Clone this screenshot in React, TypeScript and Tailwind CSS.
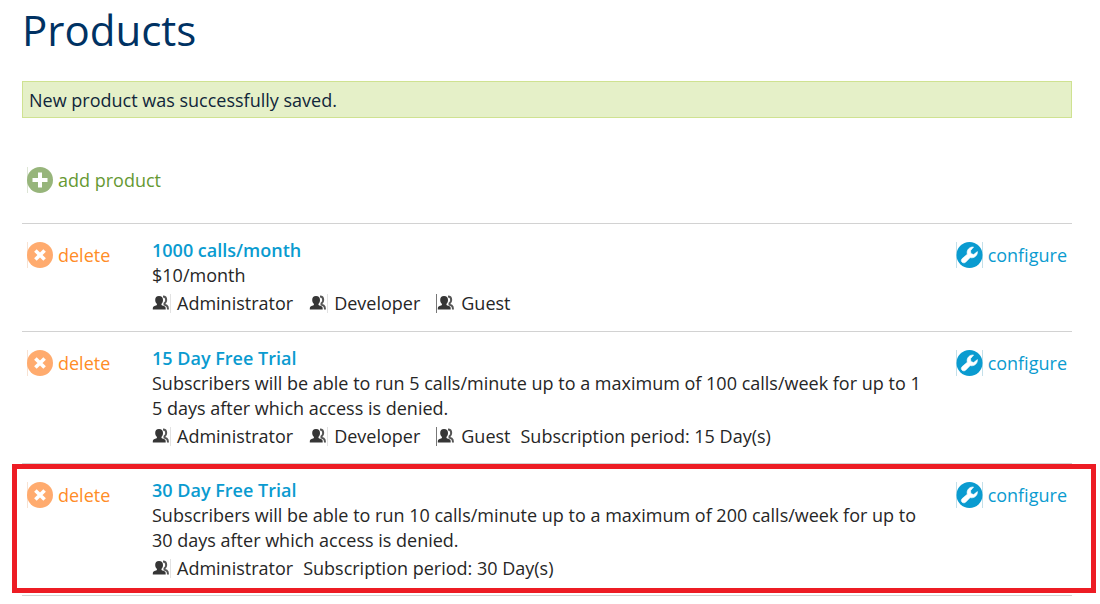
import { Fragment } from 'react';

type Product = {
  name: string;
  description: string[];
  roles: string[];
  period?: string;
  highlighted?: boolean;
};

const products: Product[] = [
  {
    name: '1000 calls/month',
    description: ['$10/month'],
    roles: ['Administrator', 'Developer', 'Guest'],
  },
  {
    name: '15 Day Free Trial',
    description: [
      'Subscribers will be able to run 5 calls/minute up to a maximum of 100 calls/week for up to 1',
      '5 days after which access is denied.',
    ],
    roles: ['Administrator', 'Developer', 'Guest'],
    period: '15 Day(s)',
  },
  {
    name: '30 Day Free Trial',
    description: [
      'Subscribers will be able to run 10 calls/minute up to a maximum of 200 calls/week for up to',
      '30 days after which access is denied.',
    ],
    roles: ['Administrator'],
    period: '30 Day(s)',
    highlighted: true,
  },
];

function AddIcon() {
  return (
    <svg className="size-[26px] shrink-0" viewBox="0 0 26 26" aria-hidden="true">
      <path d="M.5 0v26" stroke="#dde5d5" />
      <circle cx="13" cy="13" r="13" fill="#97b57b" />
      <path d="M13 5.5v15M5.5 13h15" stroke="#fff" strokeWidth="4" />
    </svg>
  );
}

function DeleteIcon() {
  return (
    <svg className="size-[26px] shrink-0" viewBox="0 0 26 26" aria-hidden="true">
      <path d="M.5 0v26" stroke="#f8e2d2" />
      <circle cx="13" cy="13" r="13" fill="#ffab6e" />
      <path d="M8.4 8.4l9.2 9.2M17.6 8.4l-9.2 9.2" stroke="#fff" strokeWidth="3.6" />
    </svg>
  );
}

function WrenchIcon() {
  return (
    <svg className="h-[26px] w-[27px] shrink-0" viewBox="0 0 27 26" aria-hidden="true">
      <path d="M.5 0v26M26.5 0v26" stroke="#c4e0ea" />
      <circle cx="13.5" cy="13" r="13" fill="#0a9bd0" />
      <path
        d="M17.6 5C13.3 4.6 10.3 8.2 11.3 12.2L6.2 16.6C5 17.7 5 19.3 6.100 20.2c1.1 1 2.6.8 3.7-.2l4.400-4.400c3.900 1 7.400-1.900 7.200-6l-3.700 2.900-2.800-.9-.4-2.900z"
        fill="#fff"
        stroke="#fff"
        strokeWidth=".6"
        strokeLinejoin="round"
      />
    </svg>
  );
}

function RoleIcon({ edge }: { edge: 'left' | 'right' }) {
  return (
    <svg className="size-[19px] shrink-0" viewBox="0 0 19 19" aria-hidden="true">
      {edge === 'left' ? (
        <path d="M.5 0v19" stroke="#777" />
      ) : (
        <path d="M18.5 0v19" stroke="#e2e2e2" />
      )}
      <g transform={edge === 'left' ? 'translate(1 0)' : undefined}>
        <path
          d="M7 2c2.7 0 4 1.5 4 3.9 0 1.7-.6 3-1.5 3.9v1.1c.9.6 3 .9 3.700 1.800.5.7.5 1.800.5 2.800H.8c0-1 0-2.100.5-2.800.7-.9 2.700-1.200 3.600-1.800V9.800C3.900 8.900 3.200 7.600 3.200 5.900 3.200 3.500 4.400 2 7 2z"
          fill="#363636"
        />
        <path
          d="M11 2.600c2.200 0 3.200 1.300 3.200 3.300 0 1.600-.6 2.700-1.700 3.500v1.200l2.200 1c1.200.8 1.300 2 1.300 3.900"
          fill="none"
          stroke="#555"
          strokeWidth="2"
        />
      </g>
    </svg>
  );
}

function ProductRow({ product }: { product: Product }) {
  return (
    <li className="relative flex items-start border-b border-[#d2d2d2] pt-3.5 pb-3.5 pl-[5px] first:pb-[15px]">
      {product.highlighted && (
        <span className="pointer-events-none absolute top-0 right-[-24px] bottom-0.5 left-[-10px] border-[5px] border-[#ed1c24]" />
      )}
      <button
        type="button"
        className="mt-1 flex w-[125px] shrink-0 cursor-pointer items-center gap-[5px] text-[#ff8c26]"
      >
        <DeleteIcon />
        delete
      </button>
      <div className="min-w-0 grow">
        <h2 className="font-semibold">
          <a href="#" className="text-[#0a9bd0]">
            {product.name}
          </a>
        </h2>
        <p>
          {product.description.map((line, i) => (
            <Fragment key={line}>
              {i > 0 && <br />}
              {line}
            </Fragment>
          ))}
        </p>
        <div className="mt-[3px] flex items-center">
          <ul className="flex gap-4">
            {product.roles.map((role) => (
              <li key={role} className="flex items-center gap-1.5">
                <RoleIcon edge={role === 'Guest' ? 'left' : 'right'} />
                {role}
              </li>
            ))}
          </ul>
          {product.period && <span className="ml-2.5">Subscription period: {product.period}</span>}
        </div>
      </div>
      <a
        href="#"
        className="mt-1 mr-[5px] flex shrink-0 items-center gap-[5px] text-[#0a9bd0]"
      >
        <WrenchIcon />
        configure
      </a>
    </li>
  );
}

export default function App() {
  return (
    <main className="min-h-screen overflow-hidden bg-white pr-7 pl-[22px] font-['Open_Sans','Noto_Sans',sans-serif] text-[18px] leading-[25px] text-[#262626]">
      <h1 className="text-[42px] leading-[60px] text-[#003263]">Products</h1>
      <p
        role="status"
        className="mt-[21px] border border-[#cfe291] bg-[#e5f0c8] px-1.5 pt-1.5 pb-1 text-[#10263a]"
      >
        New product was successfully saved.
      </p>
      <button
        type="button"
        className="mt-[49px] ml-[5px] flex cursor-pointer items-center gap-[5px] text-[#669933]"
      >
        <AddIcon />
        add product
      </button>
      <ul className="mt-[30px] border-t border-[#d2d2d2]">
        {products.map((product) => (
          <ProductRow key={product.name} product={product} />
        ))}
      </ul>
    </main>
  );
}
